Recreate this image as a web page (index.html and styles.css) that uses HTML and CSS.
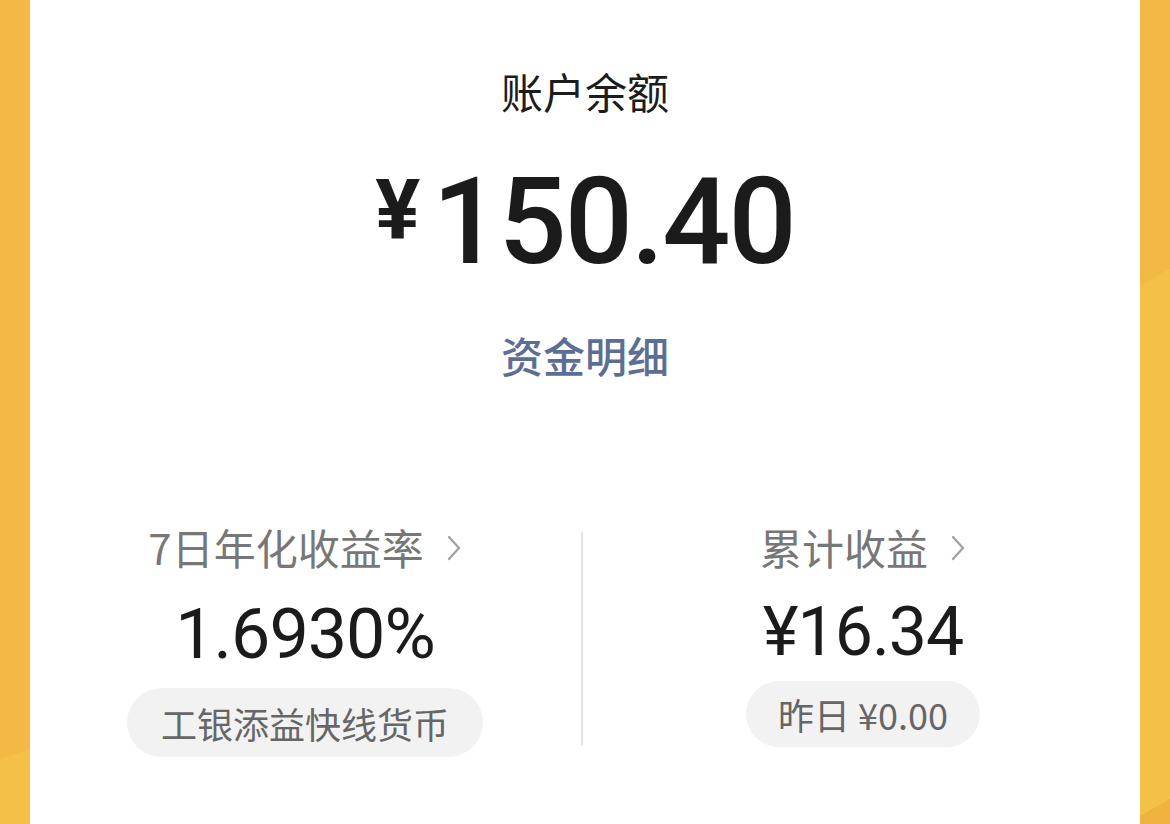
FILE: index.html
```html
<!DOCTYPE html>
<html lang="zh-CN">
<head>
<meta charset="utf-8">
<title>账户余额</title>
<link rel="stylesheet" href="styles.css">
</head>
<body>
<div class="frame">
  <main class="card">
    <h1 class="title">账户余额</h1>
    <div class="amount">
      <span class="amount-currency">¥</span>
      <span class="amount-value">150.40</span>
    </div>
    <a class="details-link">资金明细</a>
    <section class="stats">
      <div class="stat stat--left">
        <div class="stat-label">7日年化收益率
          <svg class="chevron" width="16" height="28" viewBox="0 0 16 28"><polyline points="3,3 13,14 3,25" fill="none" stroke="#a3a3a3" stroke-width="2.4" stroke-linecap="round" stroke-linejoin="round"/></svg>
        </div>
        <div class="stat-value">1.6930%</div>
        <div class="pill">工银添益快线货币</div>
      </div>
      <div class="divider"></div>
      <div class="stat stat--right">
        <div class="stat-label">累计收益
          <svg class="chevron" width="16" height="28" viewBox="0 0 16 28"><polyline points="3,3 13,14 3,25" fill="none" stroke="#a3a3a3" stroke-width="2.4" stroke-linecap="round" stroke-linejoin="round"/></svg>
        </div>
        <div class="stat-value stat-value--money">¥16.34</div>
        <div class="pill pill--small">昨日 ¥0.00</div>
      </div>
    </section>
  </main>
</div>
</body>
</html>
```

FILE: styles.css
```css
* { box-sizing: border-box; }

html, body {
  margin: 0;
  padding: 0;
  height: 824px;
  overflow: hidden;
}

body {
  background: #f2b944;
  font-family: "Noto Sans CJK SC", "Noto Sans", sans-serif;
}

.frame {
  height: 824px;
  padding: 0 30px;
  display: flex;
  background:
    linear-gradient(160deg, transparent 0 91%, rgba(255, 214, 80, 0.25) 91% 100%) left / 30px 100% no-repeat,
    linear-gradient(150deg, transparent 0 34%, rgba(255, 214, 80, 0.25) 34% 97%, rgba(235, 160, 50, 0.25) 97%) right / 30px 100% no-repeat,
    #f2b944;
}

.card {
  flex: 1;
  background: #ffffff;
  display: flex;
  flex-direction: column;
  align-items: center;
  padding-top: 67px;
}

.title {
  margin: 0;
  font-size: 42px;
  line-height: 48px;
  font-weight: 400;
  color: #1c1c1c;
}

.amount {
  margin-top: 47px;
  display: flex;
  align-items: flex-start;
  color: #1b1b1b;
  font-family: Roboto, "Liberation Sans", sans-serif;
}

.amount-currency {
  font-size: 84px;
  line-height: 84px;
  font-weight: 700;
  margin-top: 7px;
  margin-right: 12px;
}

.amount-value {
  font-size: 120px;
  line-height: 120px;
  font-weight: 500;
  letter-spacing: -2px;
}

.details-link {
  margin-top: 49px;
  font-size: 42px;
  line-height: 48px;
  font-weight: 500;
  color: #5d6e96;
}

.stats {
  margin-top: 144px;
  width: 100%;
  display: grid;
  grid-template-columns: 1fr 2px 1fr;
  align-items: start;
}

.stat {
  display: flex;
  flex-direction: column;
  align-items: center;
}

.stat--left {
  margin-left: -4px;
}

.stat-label {
  display: flex;
  align-items: center;
  gap: 22px;
  font-size: 42px;
  line-height: 48px;
  color: #777777;
}

.chevron {
  display: block;
  margin-top: 2px;
}

.stat-value {
  margin-top: 28px;
  font-family: Roboto, "Liberation Sans", sans-serif;
  font-size: 70px;
  line-height: 70px;
  font-weight: 400;
  letter-spacing: -1px;
  color: #1b1b1b;
}

.stat-value--money {
  margin-top: 26px;
  font-size: 68px;
  letter-spacing: -1px;
}

.pill {
  margin-top: 19px;
  padding: 0 34px;
  height: 69px;
  border-radius: 35px;
  background: #f2f2f2;
  display: flex;
  align-items: center;
  font-size: 36px;
  color: #666666;
}

.pill--small {
  margin-top: 14px;
  height: 66px;
  padding: 0 32px;
  font-family: "Noto Sans CJK SC", Roboto, sans-serif;
}

.divider {
  margin-top: 9px;
  margin-left: -3px;
  height: 213px;
  width: 2px;
  background: #e3e3e3;
}
```
